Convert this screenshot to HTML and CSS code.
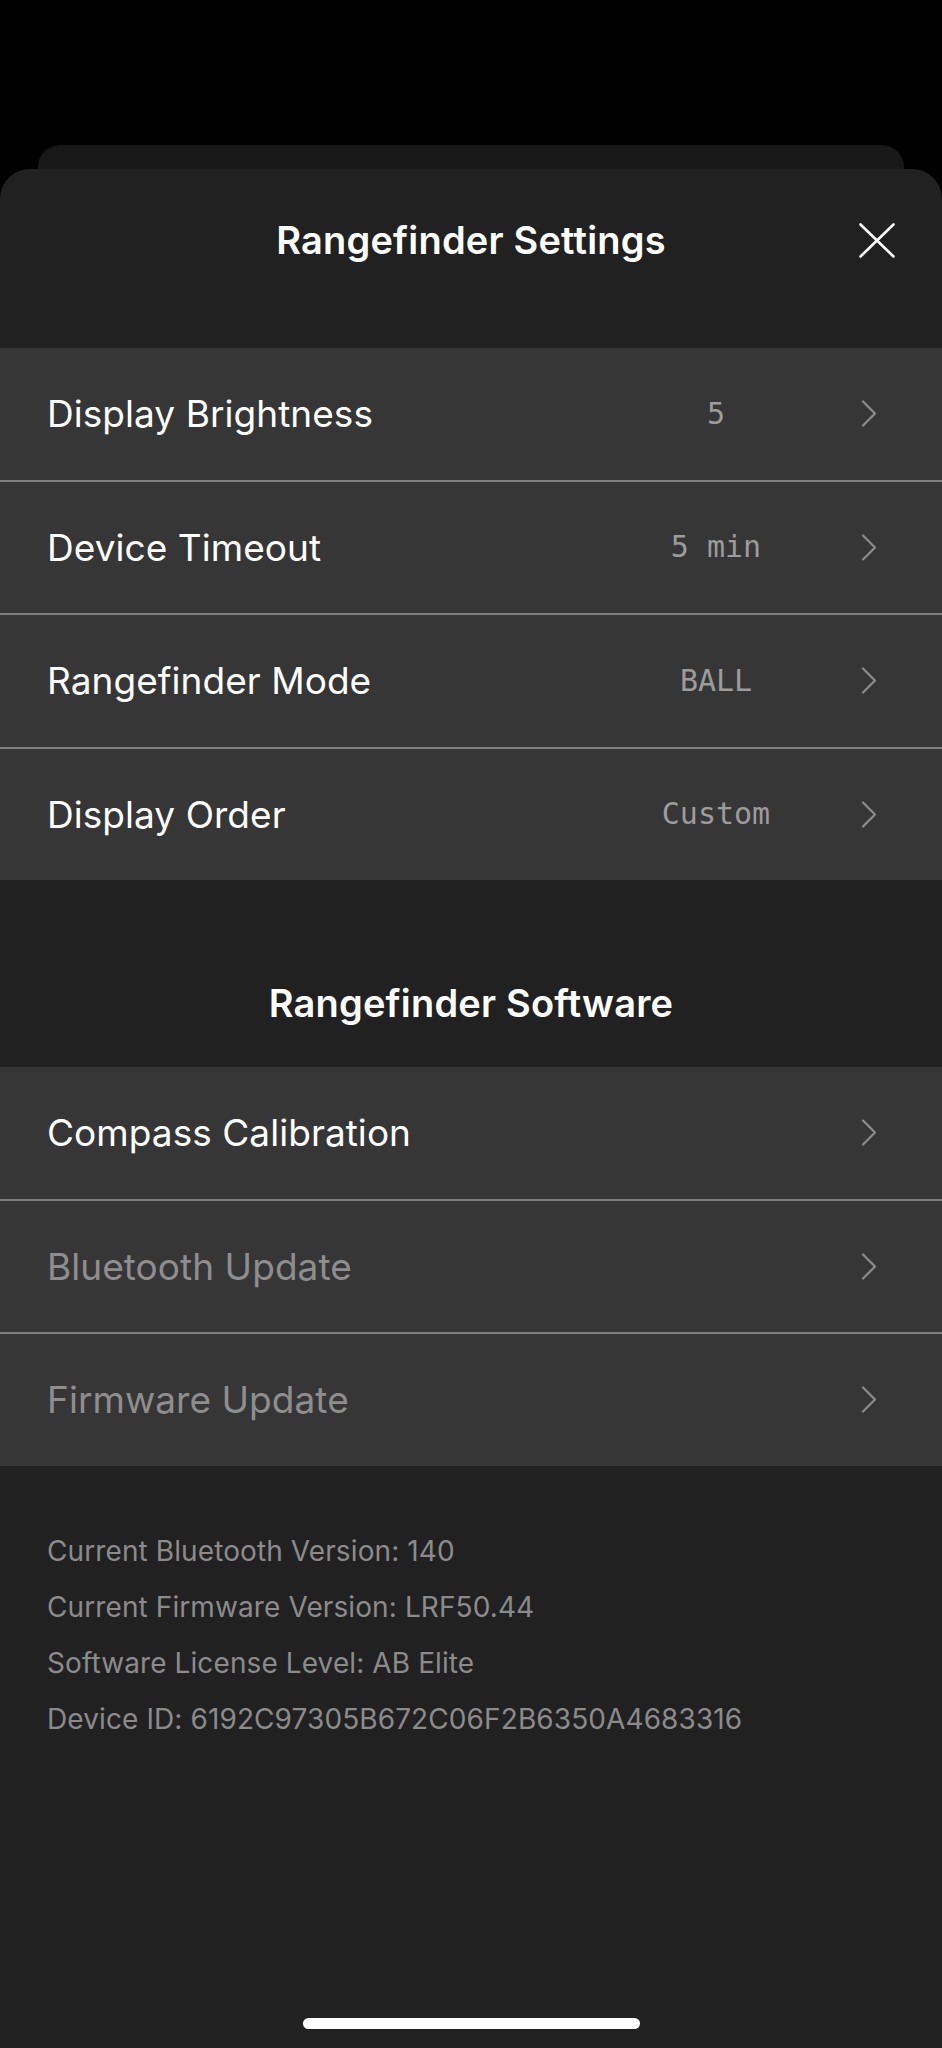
FILE: index.html
```html
<!DOCTYPE html>
<html lang="en">
<head>
    <meta charset="UTF-8">
    <meta name="viewport" content="width=device-width, initial-scale=1.0">
    <title>Rangefinder Settings</title>
    <link rel="stylesheet" href="styles.css">
</head>
<body>
    <div class="screen">
        <div class="status-area"></div>
        <div class="back-card"></div>

        <div class="sheet">
            <!-- Header -->
            <div class="sheet-header">
                <span></span>
                <h1>Rangefinder Settings</h1>
                <button type="button" class="close-btn" aria-label="Close">
                    <svg width="36" height="35" viewBox="0 0 36 35">
                        <path d="M1.5 1.5 L34.5 33.5 M34.5 1.5 L1.5 33.5" stroke="#ffffff" stroke-width="2.6" stroke-linecap="round" fill="none"/>
                    </svg>
                </button>
            </div>

            <!-- Settings group -->
            <div class="group">
                <div class="row">
                    <span class="label">Display Brightness</span>
                    <span class="value">5</span>
                    <svg class="chevron" width="16" height="27" viewBox="0 0 16 27"><polyline points="2,1.5 14,13.5 2,25.5"/></svg>
                </div>
                <div class="row">
                    <span class="label">Device Timeout</span>
                    <span class="value">5 min</span>
                    <svg class="chevron" width="16" height="27" viewBox="0 0 16 27"><polyline points="2,1.5 14,13.5 2,25.5"/></svg>
                </div>
                <div class="row">
                    <span class="label">Rangefinder Mode</span>
                    <span class="value">BALL</span>
                    <svg class="chevron" width="16" height="27" viewBox="0 0 16 27"><polyline points="2,1.5 14,13.5 2,25.5"/></svg>
                </div>
                <div class="row">
                    <span class="label">Display Order</span>
                    <span class="value">Custom</span>
                    <svg class="chevron" width="16" height="27" viewBox="0 0 16 27"><polyline points="2,1.5 14,13.5 2,25.5"/></svg>
                </div>
            </div>

            <h2 class="section-title">Rangefinder Software</h2>

            <!-- Software group -->
            <div class="group">
                <div class="row">
                    <span class="label">Compass Calibration</span>
                    <svg class="chevron" width="16" height="27" viewBox="0 0 16 27"><polyline points="2,1.5 14,13.5 2,25.5"/></svg>
                </div>
                <div class="row disabled">
                    <span class="label">Bluetooth Update</span>
                    <svg class="chevron" width="16" height="27" viewBox="0 0 16 27"><polyline points="2,1.5 14,13.5 2,25.5"/></svg>
                </div>
                <div class="row disabled">
                    <span class="label">Firmware Update</span>
                    <svg class="chevron" width="16" height="27" viewBox="0 0 16 27"><polyline points="2,1.5 14,13.5 2,25.5"/></svg>
                </div>
            </div>

            <!-- Device info -->
            <div class="info">
                <p>Current Bluetooth Version: 140</p>
                <p>Current Firmware Version: LRF50.44</p>
                <p>Software License Level: AB Elite</p>
                <p>Device ID: 6192C97305B672C06F2B6350A4683316</p>
            </div>

            <div class="home-indicator"></div>
        </div>
    </div>
</body>
</html>
```

FILE: styles.css
```css
/* General styling */
body {
    margin: 0;
    background-color: #000000;
    color: #ffffff;
    font-family: 'Inter', 'Noto Sans', sans-serif;
}

.screen {
    width: 942px;
    height: 2048px;
    display: flex;
    flex-direction: column;
    overflow: hidden;
}

.status-area {
    height: 145px;
}

/* Card peeking out behind the sheet */
.back-card {
    height: 24px;
    margin: 0 38px;
    background-color: #181818;
    border-radius: 22px 22px 0 0;
}

.sheet {
    flex: 1;
    display: flex;
    flex-direction: column;
    background-color: #212121;
    border-radius: 30px 30px 0 0;
}

/* Header */
.sheet-header {
    height: 142px;
    margin-bottom: 37px;
    display: grid;
    grid-template-columns: 1fr auto 1fr;
    align-items: center;
}

.sheet-header h1 {
    margin: 0;
    font-size: 38px;
    font-weight: 600;
    line-height: 1;
    letter-spacing: 0.2px;
}

.close-btn {
    justify-self: end;
    margin-right: 47px;
    padding: 0;
    border: none;
    background: none;
    width: 36px;
    height: 35px;
    display: block;
    cursor: pointer;
}

.close-btn svg {
    display: block;
}

/* Grouped rows */
.group {
    background-color: #363636;
}

.row {
    height: 131.5px;
    display: flex;
    align-items: center;
    padding: 0 65px 0 47px;
    border-bottom: 2px solid #7e7e7e;
}

.row:last-child {
    border-bottom: none;
}

.label {
    flex: 1;
    font-size: 37px;
    line-height: 1;
    letter-spacing: 0.05px;
}

.row.disabled .label {
    color: #8e8e8e;
}

.value {
    width: 200px;
    margin-right: 45px;
    text-align: center;
    font-family: 'DejaVu Sans Mono', 'Liberation Mono', monospace;
    font-size: 30px;
    line-height: 1;
    color: #9c9c9c;
}

.chevron {
    display: block;
    fill: none;
    stroke: #8c8c8c;
    stroke-width: 2.2;
    stroke-linecap: round;
    stroke-linejoin: round;
}

.section-title {
    margin: 0;
    padding: 104px 0 45px;
    text-align: center;
    font-size: 38px;
    font-weight: 600;
    line-height: 1;
    letter-spacing: 0.2px;
}

/* Device info */
.info {
    padding: 57px 47px 0;
}

.info p {
    margin: 0;
    font-size: 28px;
    line-height: 56px;
    color: #8b8b8b;
    letter-spacing: 0.1px;
}

.home-indicator {
    width: 337px;
    height: 11px;
    margin: auto auto 19px;
    background-color: #ffffff;
    border-radius: 6px;
}
```
